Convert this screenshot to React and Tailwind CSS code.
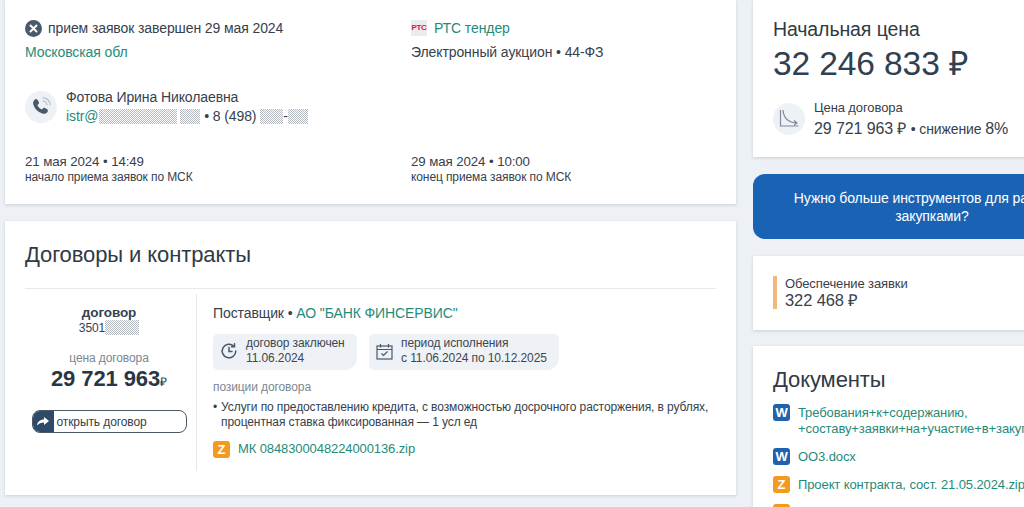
import React from 'react';

const FONT = { fontFamily: '"Liberation Sans", Arial, sans-serif' };

// закрашенные точками куски, как в оригинале
const Mask = ({ width }) => (
    <span className={`inline-block h-[15px] bg-[repeating-conic-gradient(#b4bac0_0_25%,#ffffff_0_50%)] bg-[length:2px_2px] align-[-3px] ${width}`} />
);

const FileIcon = ({ letter, color }) => (
    <span className={`flex h-[17px] w-[17px] shrink-0 items-center justify-center rounded-[3px] text-[13px] font-bold leading-none text-white ${color}`}>
        {letter}
    </span>
);

const Chip = ({ icon, title, value, width }) => (
    <div className={`flex h-[36px] items-center gap-[8px] rounded-tl-[5px] rounded-bl-[5px] rounded-tr-[5px] rounded-br-[12px] bg-[#eef1f5] pb-[2px] pl-[7px] ${width}`}>
        {icon}
        <div className="text-[12px] leading-[15px] text-[#3c4752]">
            <div>{title}</div>
            <div>{value}</div>
        </div>
    </div>
);

const TopCard = () => (
    <section className="h-[204px] bg-white pl-[20px] shadow-[0_1px_3px_rgba(60,80,110,0.2)]">
        <div className="grid grid-cols-[386px_1fr] pt-[18px] text-[14px] leading-[20px] text-[#36414c]">
            <div>
                <div className="flex items-center gap-[6px]">
                    <svg width="17" height="17" viewBox="0 0 17 17">
                        <circle cx="8.5" cy="8.5" r="8.5" fill="#4b5a6b" />
                        <path d="M5.5 5.5l6 6M11.5 5.5l-6 6" stroke="#fff" strokeWidth="2" strokeLinecap="round" />
                    </svg>
                    <span>прием заявок завершен 29 мая 2024</span>
                </div>
                <div className="mt-[4px] text-[#1f8b7a]">Московская обл</div>
            </div>
            <div>
                <div className="flex items-center gap-[7px]">
                    <span className="flex h-[16px] w-[16px] items-center justify-center bg-[#e9ebee] text-[8px] font-bold leading-none tracking-[-0.3px] text-[#d8203a]">РТС</span>
                    <span className="text-[#1f8b7a]">РТС тендер</span>
                </div>
                <div className="mt-[4px]">Электронный аукцион • 44-ФЗ</div>
            </div>
        </div>

        <div className="mt-[26px] flex items-center gap-[9px] text-[14px] leading-[19px] text-[#36414c]">
            <span className="flex h-[32px] w-[32px] items-center justify-center rounded-full bg-[#eef1f5]">
                <svg width="24" height="24" viewBox="0 0 22 22" fill="none">
                    <path d="M5 4.5c1-1 2.2-1 2.9 0l1.1 1.9c.4.8.2 1.500-.5 2.100l-.8.7c.7 1.800 2.300 3.400 4.100 4.100l.8-.8c.6-.7 1.400-.9 2.100-.5l1.900 1.100c1 .7 1 1.900 0 2.900-1.200 1.200-2.900 1.600-4.600.9C8 15.400 5.600 13 4.100 9.100 3.400 7.400 3.800 5.700 5 4.500z" fill="#47596c" />
                    <path d="M12.500 5.500a4 4 0 0 1 4 4M12.500 2.500a7 7 0 0 1 7 7" stroke="#aab4bf" strokeWidth="1" />
                </svg>
            </span>
            <div>
                <div>Фотова Ирина Николаевна</div>
                <div>
                    <span className="text-[#1f8b7a]">istr@</span><Mask width="w-[78px] ml-[1px]" /><Mask width="w-[20px] ml-[3px]" /> • 8 (498) <Mask width="w-[23px]" />-<Mask width="w-[20px]" />
                </div>
            </div>
        </div>

        <div className="mt-[27px] grid grid-cols-[386px_1fr] text-[#36414c]">
            <div>
                <div className="text-[13.3px] leading-[17px]">21 мая 2024 • 14:49</div>
                <div className="text-[12px] leading-[15px]">начало приема заявок по МСК</div>
            </div>
            <div>
                <div className="text-[13.3px] leading-[17px]">29 мая 2024 • 10:00</div>
                <div className="text-[12px] leading-[15px]">конец приема заявок по МСК</div>
            </div>
        </div>
    </section>
);

const ContractsCard = () => (
    <section className="mt-[17px] h-[274px] bg-white px-[20px] shadow-[0_1px_3px_rgba(60,80,110,0.2)]">
        <h2 className="pt-[20px] text-[22px] font-normal leading-[27px] text-[#2f3a45]">Договоры и контракты</h2>
        <div className="mt-[20px] flex border-t border-[#e6e9ed] pt-[5px]">
            <div className="flex h-[177px] w-[172px] shrink-0 flex-col items-center border-r border-[#e3e6ea] pr-[3px] pt-[11px] text-[#36414c]">
                <div className="text-[13.5px] font-bold leading-[15px]">договор</div>
                <div className="text-[12px] leading-[15px]">3501<Mask width="w-[34px]" /></div>
                <div className="mt-[15px] text-[12px] leading-[15px] text-[#7c8791]">цена договора</div>
                <div className="mt-[1px] text-[22px] font-bold leading-[24px] text-[#2b3644]">29 721 963<span className="text-[12px] font-normal">₽</span></div>
                <div className="mt-[16px] flex h-[23px] w-[155px] items-center overflow-hidden rounded-[8px] border border-[#4a5866]">
                    <span className="flex h-full w-[21px] items-center justify-center bg-[#2d4a68]">
                        <svg width="12" height="9" viewBox="0 0 12 9"><path d="M7 0l5 4-5 4V5.500C4 5.500 2 6.500 0 8.500c.3-3.500 3-6 7-6z" fill="#fff" /></svg>
                    </span>
                    <span className="pl-[3px] text-[12px] text-[#36414c]">открыть договор</span>
                </div>
            </div>
            <div className="min-w-0 flex-1 pl-[16px] pt-[10px] text-[#36414c]">
                <div className="text-[14px] leading-[18px]">Поставщик • <span className="text-[#1f8b7a]">АО "БАНК ФИНСЕРВИС"</span></div>
                <div className="mt-[12px] flex gap-[12px]">
                    <Chip
                        width="w-[144px]"
                        title="договор заключен"
                        value="11.06.2024"
                        icon={
                            <svg width="18" height="18" viewBox="0 0 18 18" fill="none" stroke="#47596c" strokeWidth="1.500" strokeLinecap="round">
                                <path d="M15.800 9a6.800 6.800 0 1 1-2-4.800" />
                                <path d="M14.500 1.800v3h-3M9 5.500V9.500h3" />
                            </svg>
                        }
                    />
                    <Chip
                        width="w-[190px]"
                        title="период исполнения"
                        value="с 11.06.2024 по 10.12.2025"
                        icon={
                            <svg width="17" height="17" viewBox="0 0 17 17" fill="none" stroke="#47596c" strokeWidth="1.200">
                                <rect x="1" y="3" width="15" height="13" />
                                <path d="M1 6.500h15M4.500 1v3.500M12.500 1v3.500M5.500 10.500l2 2 4-4" />
                            </svg>
                        }
                    />
                </div>
                <div className="mt-[10px] text-[12px] leading-[15px] text-[#7c8791]">позиции договора</div>
                <div className="mt-[5px] flex gap-[4px] text-[12px] leading-[15px]">
                    <span>•</span>
                    <span>Услуги по предоставлению кредита, с возможностью досрочного расторжения, в рублях, процентная ставка фиксированная — 1 усл ед</span>
                </div>
                <div className="mt-[9px] flex items-center gap-[8px] text-[13px] leading-[20px] text-[#1f8b7a]">
                    <FileIcon letter="Z" color="bg-[#f39a1f]" />
                    <span>МК 0848300048224000136.zip</span>
                </div>
            </div>
        </div>
    </section>
);

const SideColumn = () => (
    <aside className="ml-[17px] w-[358px] shrink-0 text-[#36414c]">
        <section className="h-[157px] bg-white pl-[20px] pt-[18px] shadow-[0_1px_3px_rgba(60,80,110,0.2)]">
            <div className="text-[19.5px] leading-[22px] text-[#2f3a45]">Начальная цена</div>
            <div className="mt-[4px] text-[33.5px] leading-[40px] text-[#2f4052]">32 246 833 ₽</div>
            <div className="mt-[15px] flex items-center gap-[9px]">
                <span className="flex h-[32px] w-[32px] items-center justify-center rounded-full bg-[#eef1f5]">
                    <svg width="22" height="22" viewBox="0 0 22 22" fill="none" stroke="#7d8a98" strokeWidth="1.200">
                        <path d="M2.500 2v16h18M5 2c.5 7 4 12 13 13M16 12.500l3 2.500-3 2" />
                    </svg>
                </span>
                <div>
                    <div className="text-[13px] leading-[17px]">Цена договора</div>
                    <div className="mt-[3px] text-[16px] leading-[19px]">29 721 963 ₽ <span className="text-[14px]">• снижение </span>8%</div>
                </div>
            </div>
        </section>
        <section className="mt-[17px] h-[65px] rounded-[12px] bg-[#1a63b4] pt-[16px] text-center text-[14px] leading-[17.500px] text-white">
            Нужно больше инструментов для работы с<br />закупками?
        </section>
        <section className="mt-[17px] h-[74px] bg-white pl-[20px] pt-[20px] shadow-[0_1px_3px_rgba(60,80,110,0.2)]">
            <div className="border-l-[4px] border-[#f2b77c] pl-[8px]">
                <div className="text-[13px] leading-[15px]">Обеспечение заявки</div>
                <div className="text-[16.5px] leading-[18px]">322 468 ₽</div>
            </div>
        </section>
        <section className="mt-[16px] h-[200px] bg-white pl-[20px] pt-[20px] shadow-[0_1px_3px_rgba(60,80,110,0.2)]">
            <h2 className="text-[22px] font-normal leading-[27px] text-[#2f3a45]">Документы</h2>
            <div className="mt-[11px] flex gap-[8px] text-[13px] leading-[16px] text-[#1f8b7a]">
                <FileIcon letter="W" color="bg-[#1f63ad]" />
                <div className="whitespace-nowrap pt-[1px]">Требования+к+содержанию,<br />+составу+заявки+на+участие+в+закупке.docx</div>
            </div>
            <div className="mt-[11px] flex items-center gap-[8px] text-[13px] leading-[15px] text-[#1f8b7a]">
                <FileIcon letter="W" color="bg-[#1f63ad]" />
                <span>ОО3.docx</span>
            </div>
            <div className="mt-[11px] flex items-center gap-[8px] text-[13px] leading-[15px] text-[#1f8b7a]">
                <FileIcon letter="Z" color="bg-[#f39a1f]" />
                <span className="whitespace-nowrap">Проект контракта, сост. 21.05.2024.zip</span>
            </div>
            <div className="mt-[11px] flex items-center gap-[8px]">
                <FileIcon letter="Z" color="bg-[#f39a1f]" />
            </div>
        </section>
    </aside>
);

export default function App() {
    return (
        <div className="h-[507px] w-[1024px] overflow-hidden bg-[#edf0f4] tracking-[-0.1px]" style={FONT}>
            <div className="flex pl-[5px]">
                <main className="w-[731px] shrink-0">
                    <TopCard />
                    <ContractsCard />
                </main>
                <SideColumn />
            </div>
        </div>
    );
}
